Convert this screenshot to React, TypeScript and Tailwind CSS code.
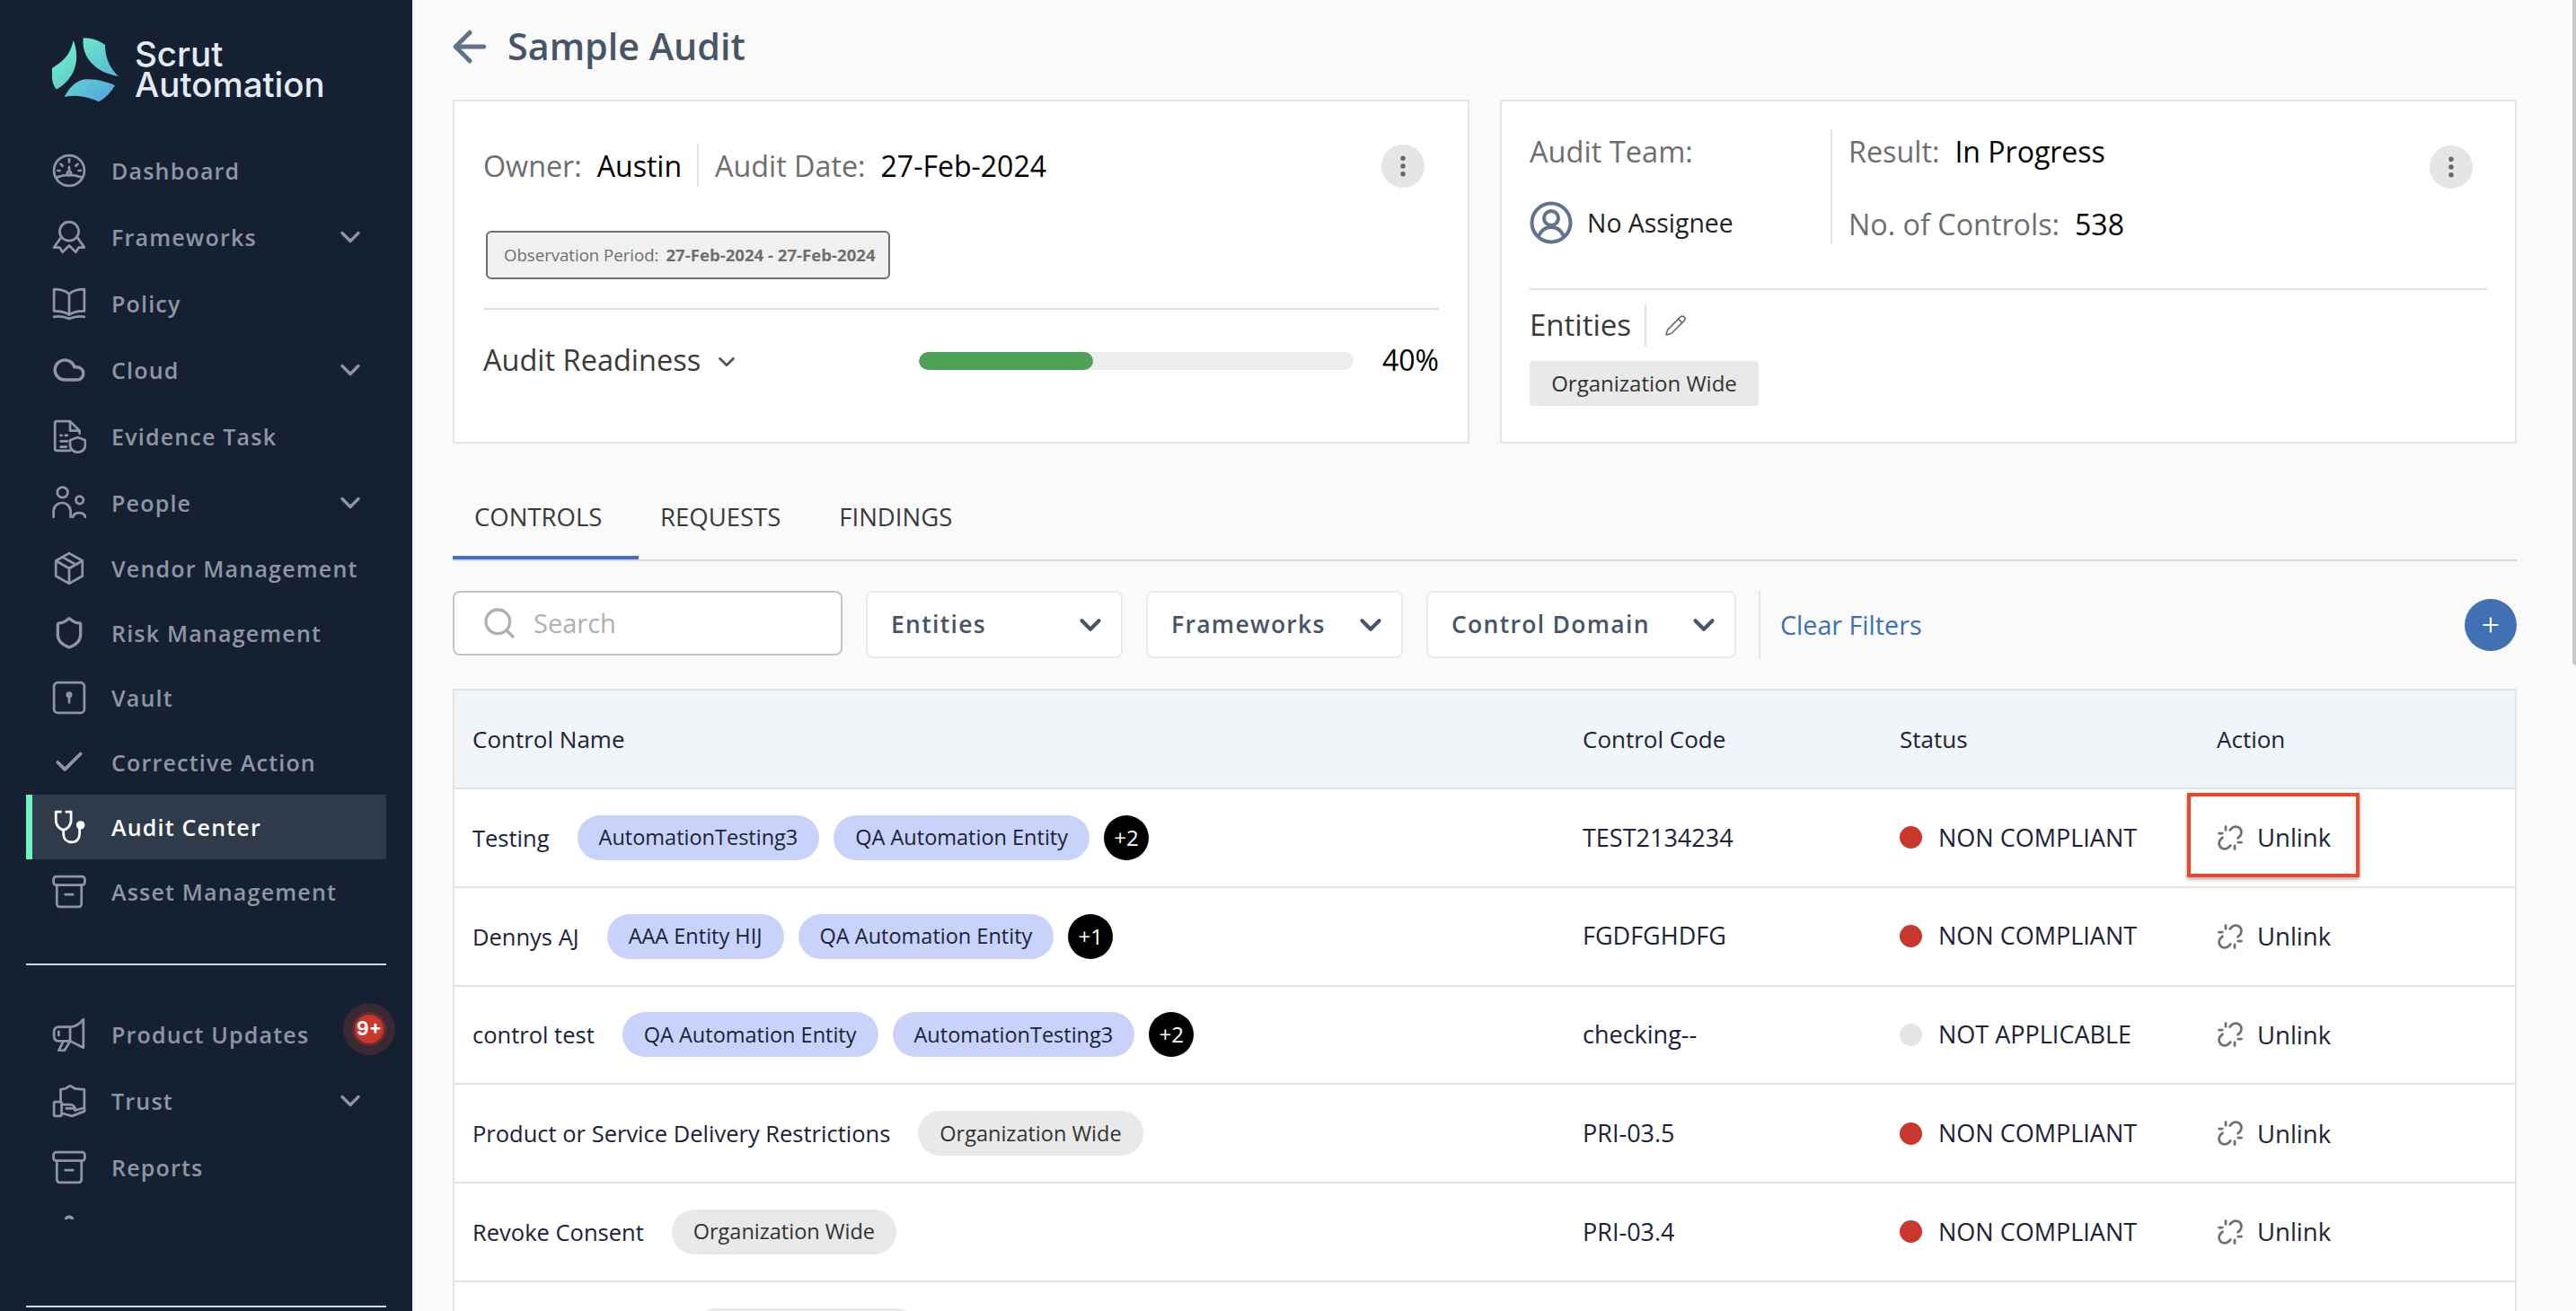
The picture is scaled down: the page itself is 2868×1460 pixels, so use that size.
import { ChevronDown, Cloud, Check, Shield, MoreVertical, Pencil, Plus, Search, ArrowLeft, Unlink, Settings } from 'lucide-react'
import type { ReactNode } from 'react'

const font = { fontFamily: '"Open Sans", sans-serif' }

function Ico({ children }: { children: ReactNode }) {
  return (
    <svg width="38" height="38" viewBox="0 0 36 36" fill="none" stroke="currentColor" strokeWidth="2.6" strokeLinecap="round" strokeLinejoin="round" className="shrink-0">
      {children}
    </svg>
  )
}

const icons: Record<string, ReactNode> = {
  dashboard: (
    <Ico>
      <circle cx="18" cy="18" r="16" />
      <path d="M5 25c8-3 18-3 26 0M18 6v3M9 11l2 2M27 11l-2 2M6 18h2M30 18h-2M18 14v5" />
      <circle cx="18" cy="21" r="2" />
    </Ico>
  ),
  frameworks: (
    <Ico>
      <circle cx="18" cy="12" r="10" />
      <path d="M9 19l-7 10 6 0 3 5 7-7 7 7 3-5 6 0-7-10" />
    </Ico>
  ),
  policy: (
    <Ico>
      <path d="M2 3c7 0 12 1 16 5 4-4 9-5 16-5v23c-7 0-12 1-16 4-4-3-9-4-16-4zM18 8v22" />
      <path d="M2 32c6-1 11 0 16 2 5-2 10-3 16-2" />
    </Ico>
  ),
  evidence: (
    <Ico>
      <path d="M19 33H5a2 2 0 0 1-2-2V4a2 2 0 0 1 2-2h14l10 10v3M19 2v10h10" />
      <path d="M9 17h1M9 23h7M9 29h6M14 17h2" />
      <path d="M27 19l8 3v5c0 4-3 7-8 8-5-1-8-4-8-8v-5z" />
    </Ico>
  ),
  people: (
    <Ico>
      <circle cx="11" cy="7" r="5.5" />
      <circle cx="29" cy="15" r="4" />
      <path d="M1.5 33v-6a9 9 0 0 1 18 0v6M22 33c1-6 12-6 13 0" />
    </Ico>
  ),
  vendor: (
    <Ico>
      <path d="M18 2l14 8v16l-14 8-14-8V10zM4 10l14 8 14-8M18 18v16M11 6l14 8" />
    </Ico>
  ),
  vault: (
    <Ico>
      <rect x="2" y="2" width="32" height="32" rx="4" />
      <circle cx="18" cy="15" r="2" fill="currentColor" />
      <path d="M18 16v7" />
    </Ico>
  ),
  audit: (
    <Ico>
      <path d="M9 2H4v9c0 6 5 10 8 10s8-4 8-10V2h-5" />
      <path d="M12 21v4c0 6 4 9 9 9s8-4 8-9v-7" />
      <circle cx="30" cy="16" r="4.5" fill="currentColor" stroke="none" />
    </Ico>
  ),
  archive: (
    <Ico>
      <rect x="1.5" y="2" width="33" height="9" rx="3" />
      <path d="M5 11v20a3 3 0 0 0 3 3h20a3 3 0 0 0 3-3V11M14 21h8" />
    </Ico>
  ),
  updates: (
    <Ico>
      <path d="M33 2v30l-14-7H7c-3 0-5-2-5-5v-5c0-3 2-5 5-5h12c5 0 10-3 14-8zM19 10v15" />
      <path d="M12 25l-5 10h6l6-10M7 15v4" />
    </Ico>
  ),
  trust: (
    <Ico>
      <path d="M9 17V6l5-1 5-3 5 3 10 1v20" />
      <rect x="2" y="19" width="8" height="15" rx="1" />
      <path d="M10 22h9c3 0 5 2 5 4H15M10 31l11 3 13-5c1-2 0-4-3-3l-7 2" />
    </Ico>
  ),
}

function NavItem({ icon, label, chevron, active, tall }: { icon: ReactNode; label: string; chevron?: boolean; active?: boolean; tall?: boolean }) {
  return (
    <div className={`flex shrink-0 items-center border-l-[7px] pl-[22px] pr-[22px] ${tall ? 'h-[74px]' : 'h-[72px]'} ${active ? 'border-[#6ff2c0] bg-[#2f3b4a] text-white' : 'border-transparent text-[#8f96a2]'}`}>
      <span className="flex w-[38px] justify-center">{icon}</span>
      <span className="ml-[28px] mt-[1px] flex-1 text-[25px] font-semibold tracking-[1.2px] whitespace-nowrap">{label}</span>
      {chevron && <ChevronDown size={36} strokeWidth={2.2} />}
    </div>
  )
}

function Sidebar() {
  return (
    <aside className="flex h-[1460px] w-[459px] shrink-0 flex-col overflow-hidden bg-[#152132]">
      <div className="flex h-[153px] shrink-0 pl-[58px] pt-[42px]">
        <svg width="74" height="72" viewBox="58 42 74 72" className="shrink-0">
          <defs>
            <linearGradient id="logoGrad" gradientUnits="userSpaceOnUse" x1="66" y1="46" x2="120" y2="114">
              <stop offset="0" stopColor="#6ff5bf" />
              <stop offset="1" stopColor="#54a6e0" />
            </linearGradient>
          </defs>
          <path fill="url(#logoGrad)" d="M81.7 45C88 60 88 85 63 99.5 58 95 57 85 58 76 70 68 78 62 81.7 45z" />
          <path fill="url(#logoGrad)" d="M92.7 42.3C102 42 110 45 117 50 117 65 123 77 132 85 112 82 90 68 92.7 42.3z" />
          <path fill="url(#logoGrad)" d="M71.7 108C78 95 88 88 97 88.3 108 88 118 91 128 95 124 102 118 109 110 113.3 98 108 84 105 71.7 108z" />
        </svg>
        <div className="ml-[18px] mt-[1px] text-[38.5px] leading-[34px] font-medium text-[#e4e9f2]" style={{ fontFamily: 'Inter, sans-serif' }}>
          <div>Scrut</div>
          <div>Automation</div>
        </div>
      </div>

      <nav className="mx-[29px] flex shrink-0 flex-col">
        <NavItem tall icon={icons.dashboard} label="Dashboard" />
        <NavItem tall icon={icons.frameworks} label="Frameworks" chevron />
        <NavItem tall icon={icons.policy} label="Policy" />
        <NavItem tall icon={<Cloud size={40} strokeWidth={2.2} />} label="Cloud" chevron />
        <NavItem tall icon={icons.evidence} label="Evidence Task" />
        <NavItem tall icon={icons.people} label="People" chevron />
        <NavItem icon={icons.vendor} label="Vendor Management" />
        <NavItem icon={<Shield size={38} strokeWidth={2.1} />} label="Risk Management" />
        <NavItem icon={icons.vault} label="Vault" />
        <NavItem icon={<Check size={38} strokeWidth={2.4} />} label="Corrective Action" />
        <NavItem active icon={icons.audit} label="Audit Center" />
        <NavItem icon={icons.archive} label="Asset Management" />
      </nav>

      <div className="mx-[29px] mt-[44px] h-[2px] shrink-0 bg-[#d5dbe5]" />

      <div className="mx-[29px] mt-[40px] h-[243px] shrink-0 overflow-hidden">
        <NavItem tall icon={icons.updates} label="Product Updates" />
        <NavItem tall icon={icons.trust} label="Trust" chevron />
        <NavItem tall icon={icons.archive} label="Reports" />
        <div className="pl-[29px] pt-[15px] text-[#8f96a2]">
          <Settings size={38} strokeWidth={2.2} />
        </div>
      </div>
      <div className="absolute left-[382px] top-[1117px] flex h-[58px] w-[58px] items-center justify-center rounded-full bg-[#3a2833]">
        <div className="flex h-[38px] w-[38px] items-center justify-center rounded-full border-[3px] border-[#662c32] bg-[#c8382e] text-[21px] font-bold text-white" style={{ fontFamily: 'Inter, sans-serif' }}>
          9+
        </div>
      </div>

      <div className="mx-[29px] mt-[96px] h-[2px] shrink-0 bg-[#d5dbe5]" />
    </aside>
  )
}

function Kebab() {
  return (
    <div className="flex h-[48px] w-[48px] items-center justify-center rounded-full bg-[#e5e5e5] text-[#666]">
      <MoreVertical size={30} strokeWidth={2.4} />
    </div>
  )
}

function Label({ k, v }: { k: string; v: string }) {
  return (
    <span className="whitespace-nowrap text-[32px] leading-[44px]">
      <span className="text-[32.3px] text-[#6e6e6e]">{k}</span>
      <span className="ml-[17px] text-black">{v}</span>
    </span>
  )
}

function AuditCard() {
  return (
    <div className="flex h-[383px] w-[1132px] flex-col border-2 border-[#e5e5e5] bg-white px-[32px]">
      <div className="mt-[47px] flex h-[48px] items-center">
        <Label k="Owner:" v="Austin" />
        <div className="ml-[17px] mr-[18px] h-[48px] w-[2px] bg-[#e3e3e3]" />
        <Label k="Audit Date:" v="27-Feb-2024" />
        <div className="ml-auto mr-[16px] mt-[1px]">
          <Kebab />
        </div>
      </div>
      <div className="ml-[3px] mt-[49px] flex h-[54px] w-[450px] items-center rounded-[6px] border-2 border-[#6e6e6e] bg-[#f0f0f0] px-[18px] text-[18.6px] whitespace-nowrap text-[#6e6e6e]">
        Observation Period:
        <b className="ml-[8px] font-bold">27-Feb-2024 - 27-Feb-2024</b>
      </div>
      <div className="mt-[32px] h-[2px] bg-[#e3e3e3]" />
      <div className="mt-[34px] flex h-[44px] items-center">
        <span className="text-[32.5px] text-[#3a3a3a]">Audit Readiness</span>
        <ChevronDown size={30} strokeWidth={2.2} className="ml-[14px] mt-[4px] text-[#555]" />
        <div className="ml-auto mt-[1px] h-[20px] w-[484px] overflow-hidden rounded-full bg-[#ededed]">
          <div className="h-full w-[40%] rounded-full bg-[#4ea157]" />
        </div>
        <span className="ml-[32px] text-[32px] text-black">40%</span>
      </div>
    </div>
  )
}

function TeamCard() {
  return (
    <div className="flex h-[383px] w-[1132px] flex-col border-2 border-[#e5e5e5] bg-white px-[31px]">
      <div className="relative mt-[31px] flex h-[128px]">
        <div className="flex w-[335px] flex-col justify-between pt-[3px]">
          <span className="text-[32.6px] leading-[44px] text-[#6e6e6e]">Audit Team:</span>
          <span className="flex items-center gap-[16px] text-[28.4px] leading-[48px] text-[#222]">
            <svg width="48" height="48" viewBox="0 0 48 48" fill="none" stroke="#62728c" strokeWidth="4">
              <circle cx="24" cy="24" r="21.5" />
              <circle cx="24" cy="19" r="8" />
              <path d="M10 39c3-7 8-10 14-10s11 3 14 10" />
            </svg>
            No Assignee
          </span>
        </div>
        <div className="w-[2px] bg-[#e3e3e3]" />
        <div className="ml-[18px] flex flex-col justify-between pt-[2px]">
          <Label k="Result:" v="In Progress" />
          <Label k="No. of Controls:" v="538" />
        </div>
        <div className="absolute right-[16px] top-[18px]">
          <Kebab />
        </div>
      </div>
      <div className="mt-[49px] h-[2px] bg-[#e3e3e3]" />
      <div className="mt-[15px] flex h-[48px] items-center">
        <span className="text-[33px] text-[#3a3a3a]">Entities</span>
        <div className="ml-[15px] h-[48px] w-[2px] bg-[#e3e3e3]" />
        <Pencil size={25} strokeWidth={1.6} className="ml-[20px] text-[#6e6e6e]" />
      </div>
      <div className="mt-[16px] flex h-[50px] w-[255px] items-center justify-center rounded-[4px] bg-[#e9e9e9] text-[24px] text-[#333]">
        Organization Wide
      </div>
    </div>
  )
}

function Filter({ label, width }: { label: string; width: string }) {
  return (
    <div className={`flex h-[75px] items-center justify-between rounded-[8px] border-2 border-[#e6ebf2] bg-white pl-[26px] pr-[15px] ${width}`}>
      <span className="text-[26.5px] font-semibold tracking-[1.3px] whitespace-nowrap text-[#475569]">{label}</span>
      <ChevronDown size={38} strokeWidth={2.6} className="text-[#475569]" />
    </div>
  )
}

type Row = {
  name: string
  tags: string[]
  more?: string
  code: string
  status: string
  org?: boolean
  na?: boolean
}

const rows: Row[] = [
  { name: 'Testing', tags: ['AutomationTesting3', 'QA Automation Entity'], more: '+2', code: 'TEST2134234', status: 'NON COMPLIANT' },
  { name: 'Dennys AJ', tags: ['AAA Entity HIJ', 'QA Automation Entity'], more: '+1', code: 'FGDFGHDFG', status: 'NON COMPLIANT' },
  { name: 'control test', tags: ['QA Automation Entity', 'AutomationTesting3'], more: '+2', code: 'checking--', status: 'NOT APPLICABLE', na: true },
  { name: 'Product or Service Delivery Restrictions', tags: ['Organization Wide'], code: 'PRI-03.5', status: 'NON COMPLIANT', org: true },
  { name: 'Revoke Consent', tags: ['Organization Wide'], code: 'PRI-03.4', status: 'NON COMPLIANT', org: true },
]

const gridCols = 'grid grid-cols-[1236px_353px_353px_1fr]'

function TableRow({ row }: { row: Row }) {
  return (
    <div className={`${gridCols} h-[109.75px] items-center border-b-2 border-[#e3e3e3] pl-[20px] text-[27px] text-[#1c2237]`}>
      <div className="flex items-center">
        <span className="mr-[31px] whitespace-nowrap text-[25.5px]">{row.name}</span>
        <div className="flex items-center gap-[16px]">
          {row.tags.map((t) => (
            <span key={t} className={`flex h-[50px] items-center rounded-full px-[24px] text-[23.5px] whitespace-nowrap ${row.org ? 'bg-[#e9e9e9] text-[#333]' : 'bg-[#c8d2fa] text-[#1c2237]'}`}>
              {t}
            </span>
          ))}
          {row.more && <span className="flex h-[50px] w-[50px] items-center justify-center rounded-full bg-black text-[24px] text-white">{row.more}</span>}
        </div>
      </div>
      <span className="whitespace-nowrap">{row.code}</span>
      <span className="flex items-center gap-[18px] whitespace-nowrap">
        <span className={`h-[25px] w-[25px] rounded-full ${row.na ? 'bg-[#e5e5e5]' : 'bg-[#c8382e]'}`} />
        {row.status}
      </span>
      <span className="flex items-center gap-[15px]">
        <Unlink size={30} strokeWidth={2.2} className="text-[#6f6f6f]" />
        <span className="text-[27.5px]">Unlink</span>
      </span>
    </div>
  )
}

export default function App() {
  return (
    <div className="relative flex h-[1460px] w-[2868px] overflow-hidden bg-[#fafafa]" style={font}>
      <Sidebar />
      <div className="w-[2px] shrink-0 bg-[#eeeeee]" />
      <main className="relative flex-1 pl-[43px] pr-[66px]">
        <div className="flex h-[111px] items-center pb-[8px] text-[#475569]">
          <ArrowLeft size={54} strokeWidth={2.2} className="-ml-[8px] text-[#62728c]" />
          <h1 className="ml-[15px] text-[41.3px] font-semibold">Sample Audit</h1>
        </div>

        <div className="flex justify-between">
          <AuditCard />
          <TeamCard />
        </div>

        <div className="mt-[26px] flex h-[105px] border-b-2 border-[#d9d9d9] text-[27.5px] text-[#3a3a3a]">
          <div className="w-[207px] border-b-[4px] border-[#3b72c8] pl-[24px] pt-[35px]">CONTROLS</div>
          <div className="ml-[24px] pt-[35px]">REQUESTS</div>
          <div className="ml-[65px] pt-[35px]">FINDINGS</div>
        </div>

        <div className="mt-[33px] flex items-start">
          <div className="flex h-[72px] w-[434px] items-center rounded-[8px] border-2 border-[#c4c4c4] bg-white pl-[30px] text-[29px] text-[#b0b0b0]">
            <Search size={40} strokeWidth={2} />
            <span className="ml-[18px]">Search</span>
          </div>
          <div className="ml-[26px] flex gap-[26px]">
            <Filter label="Entities" width="w-[286px]" />
            <Filter label="Frameworks" width="w-[286px]" />
            <Filter label="Control Domain" width="w-[345px]" />
          </div>
          <div className="ml-[25px] h-[76px] w-[2px] bg-[#e3e3e3]" />
          <span className="ml-[22px] self-center text-[28.7px] text-[#3f6fb5]">Clear Filters</span>
          <div className="ml-auto mt-[9px] flex h-[58px] w-[58px] items-center justify-center rounded-full bg-[#4270b5] text-white">
            <Plus size={26} strokeWidth={2} />
          </div>
        </div>

        <div className="mt-[33px] border-x-2 border-t-2 border-[#e3e3e3] bg-white">
          <div className={`${gridCols} h-[110px] items-center border-b-2 border-[#e3e3e3] bg-[#f1f4f9] pl-[20px] text-[26px] text-[#1c2237]`}>
            <span>Control Name</span>
            <span>Control Code</span>
            <span>Status</span>
            <span>Action</span>
          </div>
          {rows.map((r) => (
            <TableRow key={r.name} row={r} />
          ))}
          <div className="flex h-[110px] items-start pl-[267px] pt-[29px]">
            <span className="flex h-[50px] items-center rounded-full bg-[#e9e9e9] px-[24px] text-[23.5px] text-[#333]">Organization Wide</span>
          </div>
        </div>

        <div className="absolute left-[1974px] top-[883px] h-[94px] w-[192px] border-4 border-[#ef4628] shadow-[0_2px_4px_rgba(0,0,0,0.35)]" />
      </main>
      <div className="absolute right-0 top-0 h-[741px] w-[4px] rounded-bl-[4px] bg-[#c8c8c8]" />
    </div>
  )
}
